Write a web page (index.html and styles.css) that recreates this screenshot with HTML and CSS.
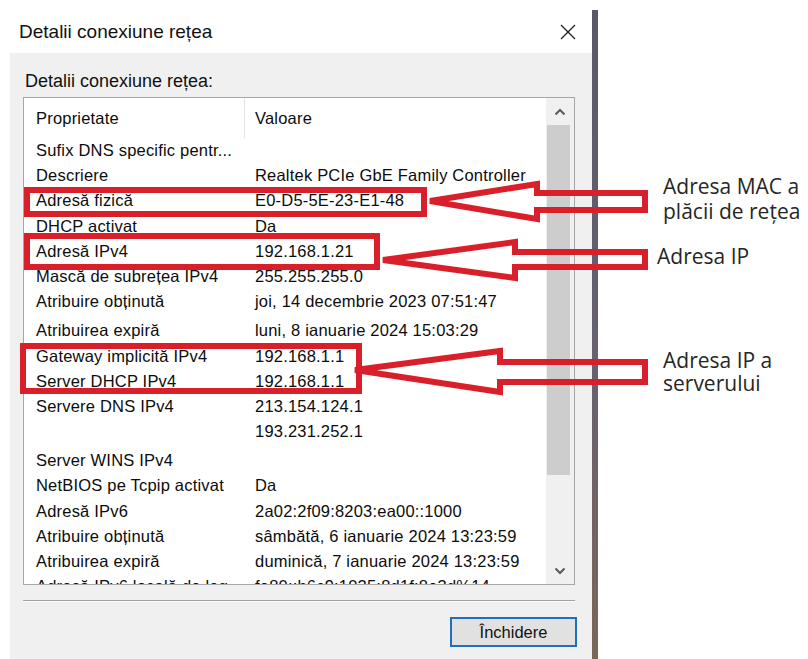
FILE: index.html
```html
<!DOCTYPE html>
<html lang="ro">
<head>
<meta charset="utf-8">
<title>Detalii conexiune rețea</title>
<link rel="stylesheet" href="styles.css">
</head>
<body>
<div class="sheet">
  <section class="dialog">
    <header class="titlebar">
      <span class="title">Detalii conexiune rețea</span>
      <span class="close">
        <svg width="16" height="16" viewBox="0 0 16 16"><path d="M1 1L15 15M15 1L1 15" stroke="#1e1e1e" stroke-width="1.3" fill="none"/></svg>
      </span>
    </header>
    <div class="content">
      <div class="group-label">Detalii conexiune rețea:</div>
      <div class="listbox">
        <div class="table">
          <div class="row head"><div class="cell prop">Proprietate</div><div class="cell val">Valoare</div></div>
          <div class="row"><div class="cell prop">Sufix DNS specific pentr...</div><div class="cell val"></div></div>
          <div class="row"><div class="cell prop">Descriere</div><div class="cell val">Realtek PCIe GbE Family Controller</div></div>
          <div class="row"><div class="cell prop">Adresă fizică</div><div class="cell val">E0-D5-5E-23-E1-48</div></div>
          <div class="row"><div class="cell prop">DHCP activat</div><div class="cell val">Da</div></div>
          <div class="row"><div class="cell prop">Adresă IPv4</div><div class="cell val">192.168.1.21</div></div>
          <div class="row"><div class="cell prop">Mască de subrețea IPv4</div><div class="cell val">255.255.255.0</div></div>
          <div class="row gap-after"><div class="cell prop">Atribuire obținută</div><div class="cell val">joi, 14 decembrie 2023 07:51:47</div></div>
          <div class="row"><div class="cell prop">Atribuirea expiră</div><div class="cell val">luni, 8 ianuarie 2024 15:03:29</div></div>
          <div class="row"><div class="cell prop">Gateway implicită IPv4</div><div class="cell val">192.168.1.1</div></div>
          <div class="row"><div class="cell prop">Server DHCP IPv4</div><div class="cell val">192.168.1.1</div></div>
          <div class="row"><div class="cell prop">Servere DNS IPv4</div><div class="cell val">213.154.124.1</div></div>
          <div class="row gap-after"><div class="cell prop"></div><div class="cell val">193.231.252.1</div></div>
          <div class="row"><div class="cell prop">Server WINS IPv4</div><div class="cell val"></div></div>
          <div class="row"><div class="cell prop">NetBIOS pe Tcpip activat</div><div class="cell val">Da</div></div>
          <div class="row"><div class="cell prop">Adresă IPv6</div><div class="cell val">2a02:2f09:8203:ea00::1000</div></div>
          <div class="row"><div class="cell prop">Atribuire obținută</div><div class="cell val">sâmbătă, 6 ianuarie 2024 13:23:59</div></div>
          <div class="row"><div class="cell prop">Atribuirea expiră</div><div class="cell val">duminică, 7 ianuarie 2024 13:23:59</div></div>
          <div class="row"><div class="cell prop">Adresă IPv6 locală de legătură</div><div class="cell val">fe80::b6c9:1025:8d1f:8e3d%14</div></div>
        </div>
        <div class="scrollbar">
          <div class="sb-btn">
            <svg width="12" height="8" viewBox="0 0 12 8"><path d="M1.5 6.5L6 2L10.5 6.5" stroke="#5a5a5a" stroke-width="2" fill="none"/></svg>
          </div>
          <div class="sb-track"><div class="sb-thumb"></div></div>
          <div class="sb-btn">
            <svg width="12" height="8" viewBox="0 0 12 8"><path d="M1.5 1.5L6 6L10.5 1.5" stroke="#5a5a5a" stroke-width="2" fill="none"/></svg>
          </div>
        </div>
      </div>
      <div class="sep"></div>
      <div class="actions"><button class="btn" type="button">Închidere</button></div>
    </div>
  </section>
  <div class="edge"></div>
  <aside class="notes">
    <p class="note note-mac">Adresa MAC a<br>plăcii de rețea</p>
    <p class="note note-ip">Adresa IP</p>
    <p class="note note-srv">Adresa IP a<br>serverului</p>
  </aside>
  <svg class="marks" width="808" height="659" viewBox="0 0 808 659">
    <rect x="27" y="190" width="397" height="24"/>
    <rect x="27" y="236" width="350" height="31"/>
    <rect x="23" y="346" width="336" height="45"/>
    <polygon points="430,201 537,184 537,193 645,193 645,210 537,210 537,219"/>
    <polygon points="383,260 515,242 515,252 645,252 645,267 515,267 515,278"/>
    <polygon points="355,370 500,351 500,362 645,362 645,382 500,382 500,392"/>
  </svg>
</div>
</body>
</html>
```

FILE: styles.css
```css
* {
  box-sizing: border-box;
}

html,
body {
  margin: 0;
  padding: 0;
}

body {
  background: #fff;
  font-family: "Liberation Sans", Arial, sans-serif;
  color: #111;
}

.sheet {
  position: relative;
  width: 808px;
  height: 659px;
  overflow: hidden;
  display: flex;
  align-items: flex-start;
}

/* dialog window */
.dialog {
  margin-left: 10px;
  width: 582px;
  height: 659px;
  display: flex;
  flex-direction: column;
}

.titlebar {
  height: 53px;
  padding-top: 10px;
  background: #fff;
  display: flex;
  align-items: center;
  justify-content: space-between;
}

.title {
  padding-left: 9px;
  font-size: 19px;
  line-height: 24px;
}

.close {
  width: 32px;
  height: 32px;
  margin-right: 8px;
  display: flex;
  align-items: center;
  justify-content: center;
}

.content {
  flex: 1;
  background: #f0f0f0;
  padding: 17px 17px 0 13px;
}

.group-label {
  margin: 0 0 5px 2px;
  font-size: 18px;
  line-height: 22px;
}

/* property list */
.listbox {
  height: 488px;
  border: 1px solid #a6a6a6;
  background: #fff;
  display: flex;
}

.table {
  flex: 1;
  overflow: hidden;
  font-size: 16.5px;
  letter-spacing: 0.2px;
  color: #0c0c0c;
}

.row {
  display: grid;
  grid-template-columns: 221px 1fr;
  height: 25.2px;
  line-height: 25.2px;
}

.row.head {
  height: 40px;
  line-height: 40px;
}

.row.gap-after {
  margin-bottom: 4px;
}

.cell {
  white-space: nowrap;
  overflow: hidden;
  text-overflow: ellipsis;
}

.prop {
  padding-left: 12px;
}

.val {
  padding-left: 10px;
}

.head .prop {
  border-right: 1px solid #e3e3e3;
}

/* vertical scrollbar */
.scrollbar {
  width: 28px;
  background: #f0f0f0;
  display: flex;
  flex-direction: column;
}

.sb-btn {
  height: 27px;
  display: flex;
  align-items: center;
  justify-content: center;
}

.sb-track {
  flex: 1;
  padding: 0 4px 0 1px;
}

.sb-thumb {
  height: 350px;
  background: #cdcdcd;
}

.sep {
  margin-top: 15px;
  border-top: 1px solid #a0a0a0;
  border-bottom: 1px solid #fbfbfb;
}

.actions {
  display: flex;
  justify-content: flex-end;
  padding-top: 15px;
}

.btn {
  width: 127px;
  height: 30px;
  margin-right: -2px;
  padding: 0;
  border: 2px solid #1d6fbf;
  background: #e1e1e1;
  color: #111;
  font-family: "Liberation Sans", Arial, sans-serif;
  font-size: 16.5px;
}

/* edge of the window behind */
.edge {
  width: 6px;
  height: 649px;
  margin-top: 10px;
  background: linear-gradient(#5b5968, #676170 55%, #7c6558);
}

/* annotations */
.notes {
  position: relative;
  flex: 1;
  height: 659px;
}

.note {
  position: absolute;
  margin: 0;
  font-family: "Open Sans", "Noto Sans", sans-serif;
  font-size: 21px;
  line-height: 25px;
  color: #262626;
  white-space: nowrap;
}

.note-mac {
  left: 65px;
  top: 174px;
}

.note-ip {
  left: 59px;
  top: 244px;
}

.note-srv {
  left: 65px;
  top: 349px;
  line-height: 23px;
}

.marks {
  position: absolute;
  left: 0;
  top: 0;
  pointer-events: none;
  fill: none;
  stroke: #d9202a;
  stroke-width: 6;
}
```
